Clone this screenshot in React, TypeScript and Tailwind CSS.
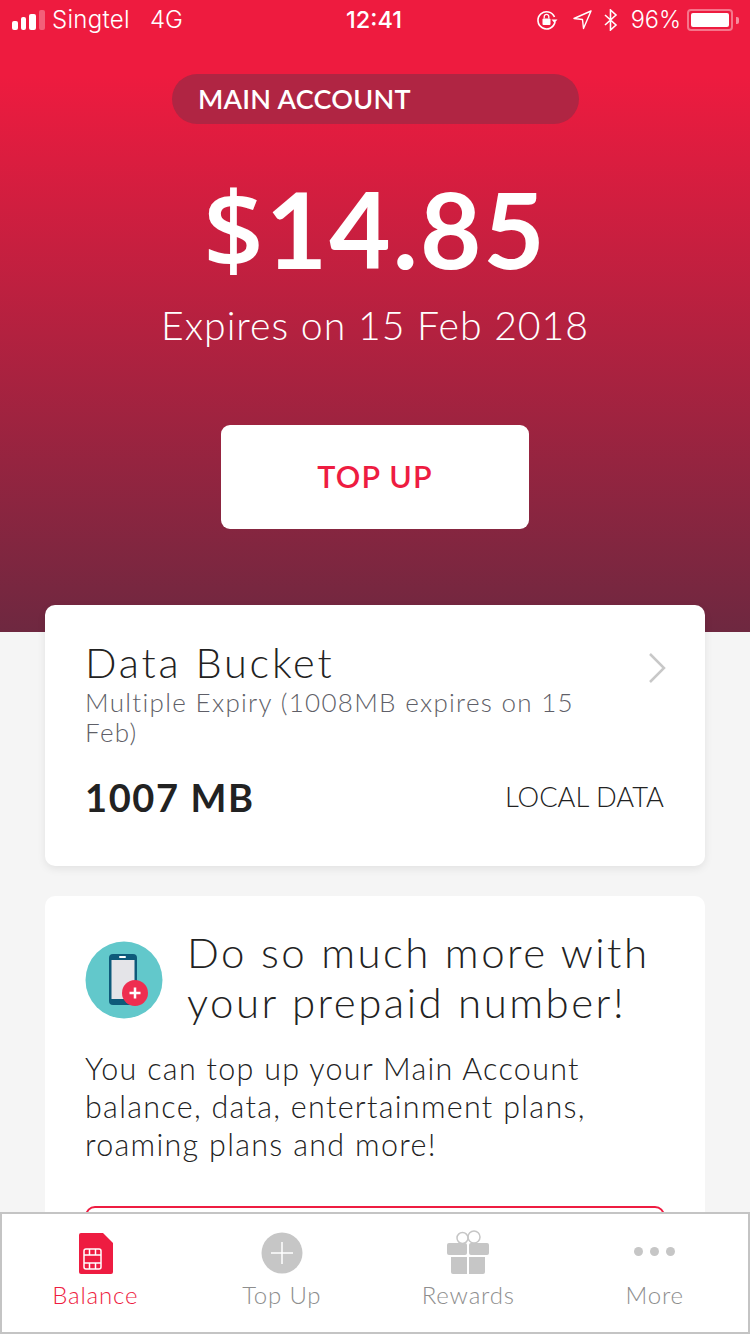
import React from 'react';

const avenir = { fontFamily: 'Lato, "Open Sans", sans-serif' };

function StatusBar() {
  return (
    <div className="flex h-[40px] items-center justify-between pl-[12px] pr-[11px] text-white font-['Inter',sans-serif] text-[24px] font-light">
      <div className="flex items-center">
        <div className="flex items-end gap-[3px]">
          <span className="h-[9px] w-[6px] rounded-[2px] bg-white" />
          <span className="h-[13px] w-[5px] rounded-[2px] bg-white" />
          <span className="h-[16px] w-[7px] rounded-[2px] bg-white" />
          <span className="h-[20px] w-[6px] rounded-[2px] bg-white/30" />
        </div>
        <span className="ml-[7px] tracking-[0.3px]">Singtel</span>
        <span className="ml-[20px]">4G</span>
      </div>
      <div className="absolute left-0 right-0 top-0 flex h-[40px] items-center justify-center pr-[2px] text-[23.5px] font-medium">12:41</div>
      <div className="flex items-center">
        <svg width="22" height="22" viewBox="0 0 22 22" fill="none">
          <path d="M18.5 8A8.6 8.6 0 1 0 19 13" stroke="white" strokeWidth="1.6" />
          <path d="M15.5 10.5h6l-3 3.5z" fill="white" />
          <rect x="6.5" y="9.5" width="8" height="6.5" rx="1" fill="white" />
          <path d="M8.2 9.5V7.6a2.3 2.3 0 0 1 4.6 0v1.9" stroke="white" strokeWidth="1.3" />
        </svg>
        <svg className="ml-[14px]" width="20" height="20" viewBox="0 0 20 20" fill="none">
          <path d="M19 1 2 8.5l8.5 1 1 9z" stroke="white" strokeWidth="1.4" strokeLinejoin="round" />
        </svg>
        <svg className="ml-[11px]" width="16" height="22" viewBox="0 0 16 22" fill="none">
          <path d="M2 6l11 10-5.5 5V1L13 6 2 16" stroke="white" strokeWidth="1.6" />
        </svg>
        <span className="ml-[12px] text-[23.5px]">96%</span>
        <div className="ml-[6px] flex h-[22px] w-[46px] items-center rounded-[4px] border-2 border-white/40 p-[2px]">
          <div className="h-full w-full rounded-[2px] bg-white" />
        </div>
        <span className="ml-[3px] h-[7px] w-[3px] rounded-r-[2px] bg-white/50" />
      </div>
    </div>
  );
}

function BalanceIcon() {
  return (
    <svg className="ml-[2px]" width="34" height="41" viewBox="0 0 34 41">
      <path d="M2 0h22l10 10v29a2 2 0 0 1-2 2H2a2 2 0 0 1-2-2V2a2 2 0 0 1 2-2z" fill="#ee1c41" />
      <rect x="5" y="16" width="17" height="20" rx="2" fill="none" stroke="#fff" strokeWidth="1.5" />
      <path d="M5 22h17M5 30h17M10.5 16v6M16.5 16v6M10.5 30v6M16.5 30v6" stroke="#fff" strokeWidth="1.5" />
    </svg>
  );
}

function TabIcon({ name }: { name: string }) {
  if (name === 'Balance') return <BalanceIcon />;
  if (name === 'Top Up') {
    return (
      <svg width="42" height="42" viewBox="0 0 42 42">
        <circle cx="21" cy="21" r="20.5" fill="#c6c6c6" />
        <path d="M21 10v22M10 21h22" stroke="#fff" strokeWidth="1.5" />
      </svg>
    );
  }
  if (name === 'Rewards') {
    return (
      <svg width="42" height="44" viewBox="0 0 42 44">
        <circle cx="15.5" cy="8" r="5.5" fill="none" stroke="#c6c6c6" strokeWidth="1.5" />
        <circle cx="27" cy="7" r="6" fill="none" stroke="#c6c6c6" strokeWidth="1.5" />
        <rect x="0" y="13" width="20" height="12" rx="2" fill="#c6c6c6" />
        <rect x="22" y="13" width="20" height="12" rx="2" fill="#c6c6c6" />
        <path d="M4 27h16v17H6a2 2 0 0 1-2-2z" fill="#c6c6c6" />
        <path d="M22 27h16v15a2 2 0 0 1-2 2H22z" fill="#c6c6c6" />
      </svg>
    );
  }
  return (
    <div className="flex h-[42px] items-center gap-[7px] pb-[4px]">
      <span className="h-[9px] w-[9px] rounded-full bg-[#c6c6c6]" />
      <span className="h-[9px] w-[9px] rounded-full bg-[#c6c6c6]" />
      <span className="h-[9px] w-[9px] rounded-full bg-[#c6c6c6]" />
    </div>
  );
}

export default function App() {
  const tabs = ['Balance', 'Top Up', 'Rewards', 'More'];

  return (
    <div className="relative h-[1334px] w-[750px] overflow-hidden bg-[#f5f5f5]" style={avenir}>
      {/* Header */}
      <div className="relative flex h-[632px] flex-col bg-linear-to-b/srgb from-[#ee1b3f] from-[12%] to-[#6e2840]">
        <StatusBar />
        <div className="ml-[172px] mt-[34px] flex h-[50px] w-[407px] items-center rounded-full bg-[#b02543] pl-[26px] text-[27px] font-semibold tracking-[0.25px] text-white">
          MAIN ACCOUNT
        </div>
        <div className="mt-[44px] text-center text-[106px] font-bold leading-[120px] tracking-[2px] text-white">
          <span className="font-['Open_Sans',sans-serif] font-semibold">$</span>14.85
        </div>
        <div className="mt-[12px] text-center text-[39.2px] font-light leading-[50px] tracking-[1px] text-white">Expires on 15 Feb 2018</div>
        <div className="ml-[221px] mt-[75px] flex h-[104px] w-[308px] items-center justify-center rounded-[9px] bg-white text-[30.5px] font-semibold tracking-[1.2px] text-[#ee1c41]">
          TOP UP
        </div>
      </div>

      {/* Cards */}
      <div className="relative mx-[45px] -mt-[27px] flex flex-col gap-[30px]">
        <div className="h-[261px] rounded-[10px] bg-white pl-[40px] pr-[41px] pt-[32px] shadow-[0_3px_8px_rgba(0,0,0,0.08)]">
          <div className="flex items-start justify-between">
            <div className="w-[500px]">
              <div className="text-[41.5px] font-light leading-[50px] tracking-[2.8px] text-[#222]">Data Bucket</div>
              <div className="text-[26px] font-light leading-[30px] tracking-[1.3px] text-[#5f5f68]">
                Multiple Expiry (1008MB expires on 15 Feb)
              </div>
            </div>
            <svg className="mr-[-2px] mt-[16px]" width="18" height="30" viewBox="0 0 18 30" fill="none">
              <path d="M2 1l14 14L2 29" stroke="#c8c8c8" strokeWidth="2.5" />
            </svg>
          </div>
          <div className="mt-[22px] flex items-center justify-between">
            <span className="text-[38px] font-bold tracking-[1.6px] text-[#222]">1007 MB</span>
            <span className="text-[27.3px] font-light text-[#222]">LOCAL DATA</span>
          </div>
        </div>

        <div className="h-[400px] rounded-[10px] bg-white px-[40px] pt-[31px]">
          <div className="flex items-center">
            <svg className="mt-[6px] shrink-0" width="78" height="78" viewBox="0 0 78 78">
              <circle cx="39" cy="39" r="38.5" fill="#62c8cb" />
              <rect x="24" y="13" width="28" height="51" rx="4" fill="#0e5a7a" />
              <rect x="26.5" y="19" width="23" height="39" fill="#e4e4e8" />
              <rect x="34" y="15" width="7" height="2" rx="1" fill="#fff" />
              <circle cx="50" cy="52" r="13" fill="#ee2e50" />
              <path d="M50 46.5v11M44.5 52h11" stroke="#fff" strokeWidth="2.5" />
            </svg>
            <div className="ml-[24px] text-[42px] font-light leading-[50px] tracking-[2.5px] text-[#222]">
              Do so much more with your prepaid number!
            </div>
          </div>
          <div className="mt-[22px] text-[30.5px] font-light leading-[38px] tracking-[1.3px] text-[#222]">
            You can top up your Main Account balance, data, entertainment plans, roaming plans and more!
          </div>
          <div className="mt-[43px] h-[60px] rounded-[10px] border-2 border-[#ee1c41]" />
        </div>
      </div>

      {/* Tab bar */}
      <div className="absolute bottom-0 left-0 right-0 grid h-[122px] grid-cols-4 border-2 border-[#c4c4c4] bg-white">
        {tabs.map((tab) => (
          <div key={tab} className="flex flex-col items-center pt-[16px]">
            <div className="flex h-[44px] items-end">
              <TabIcon name={tab} />
            </div>
            <span className={`mt-[3px] text-[24px] font-light tracking-[0.8px] ${tab === 'Balance' ? 'text-[#ee1c41]' : 'text-[#8e8e8e]'}`}>{tab}</span>
          </div>
        ))}
      </div>
    </div>
  );
}
